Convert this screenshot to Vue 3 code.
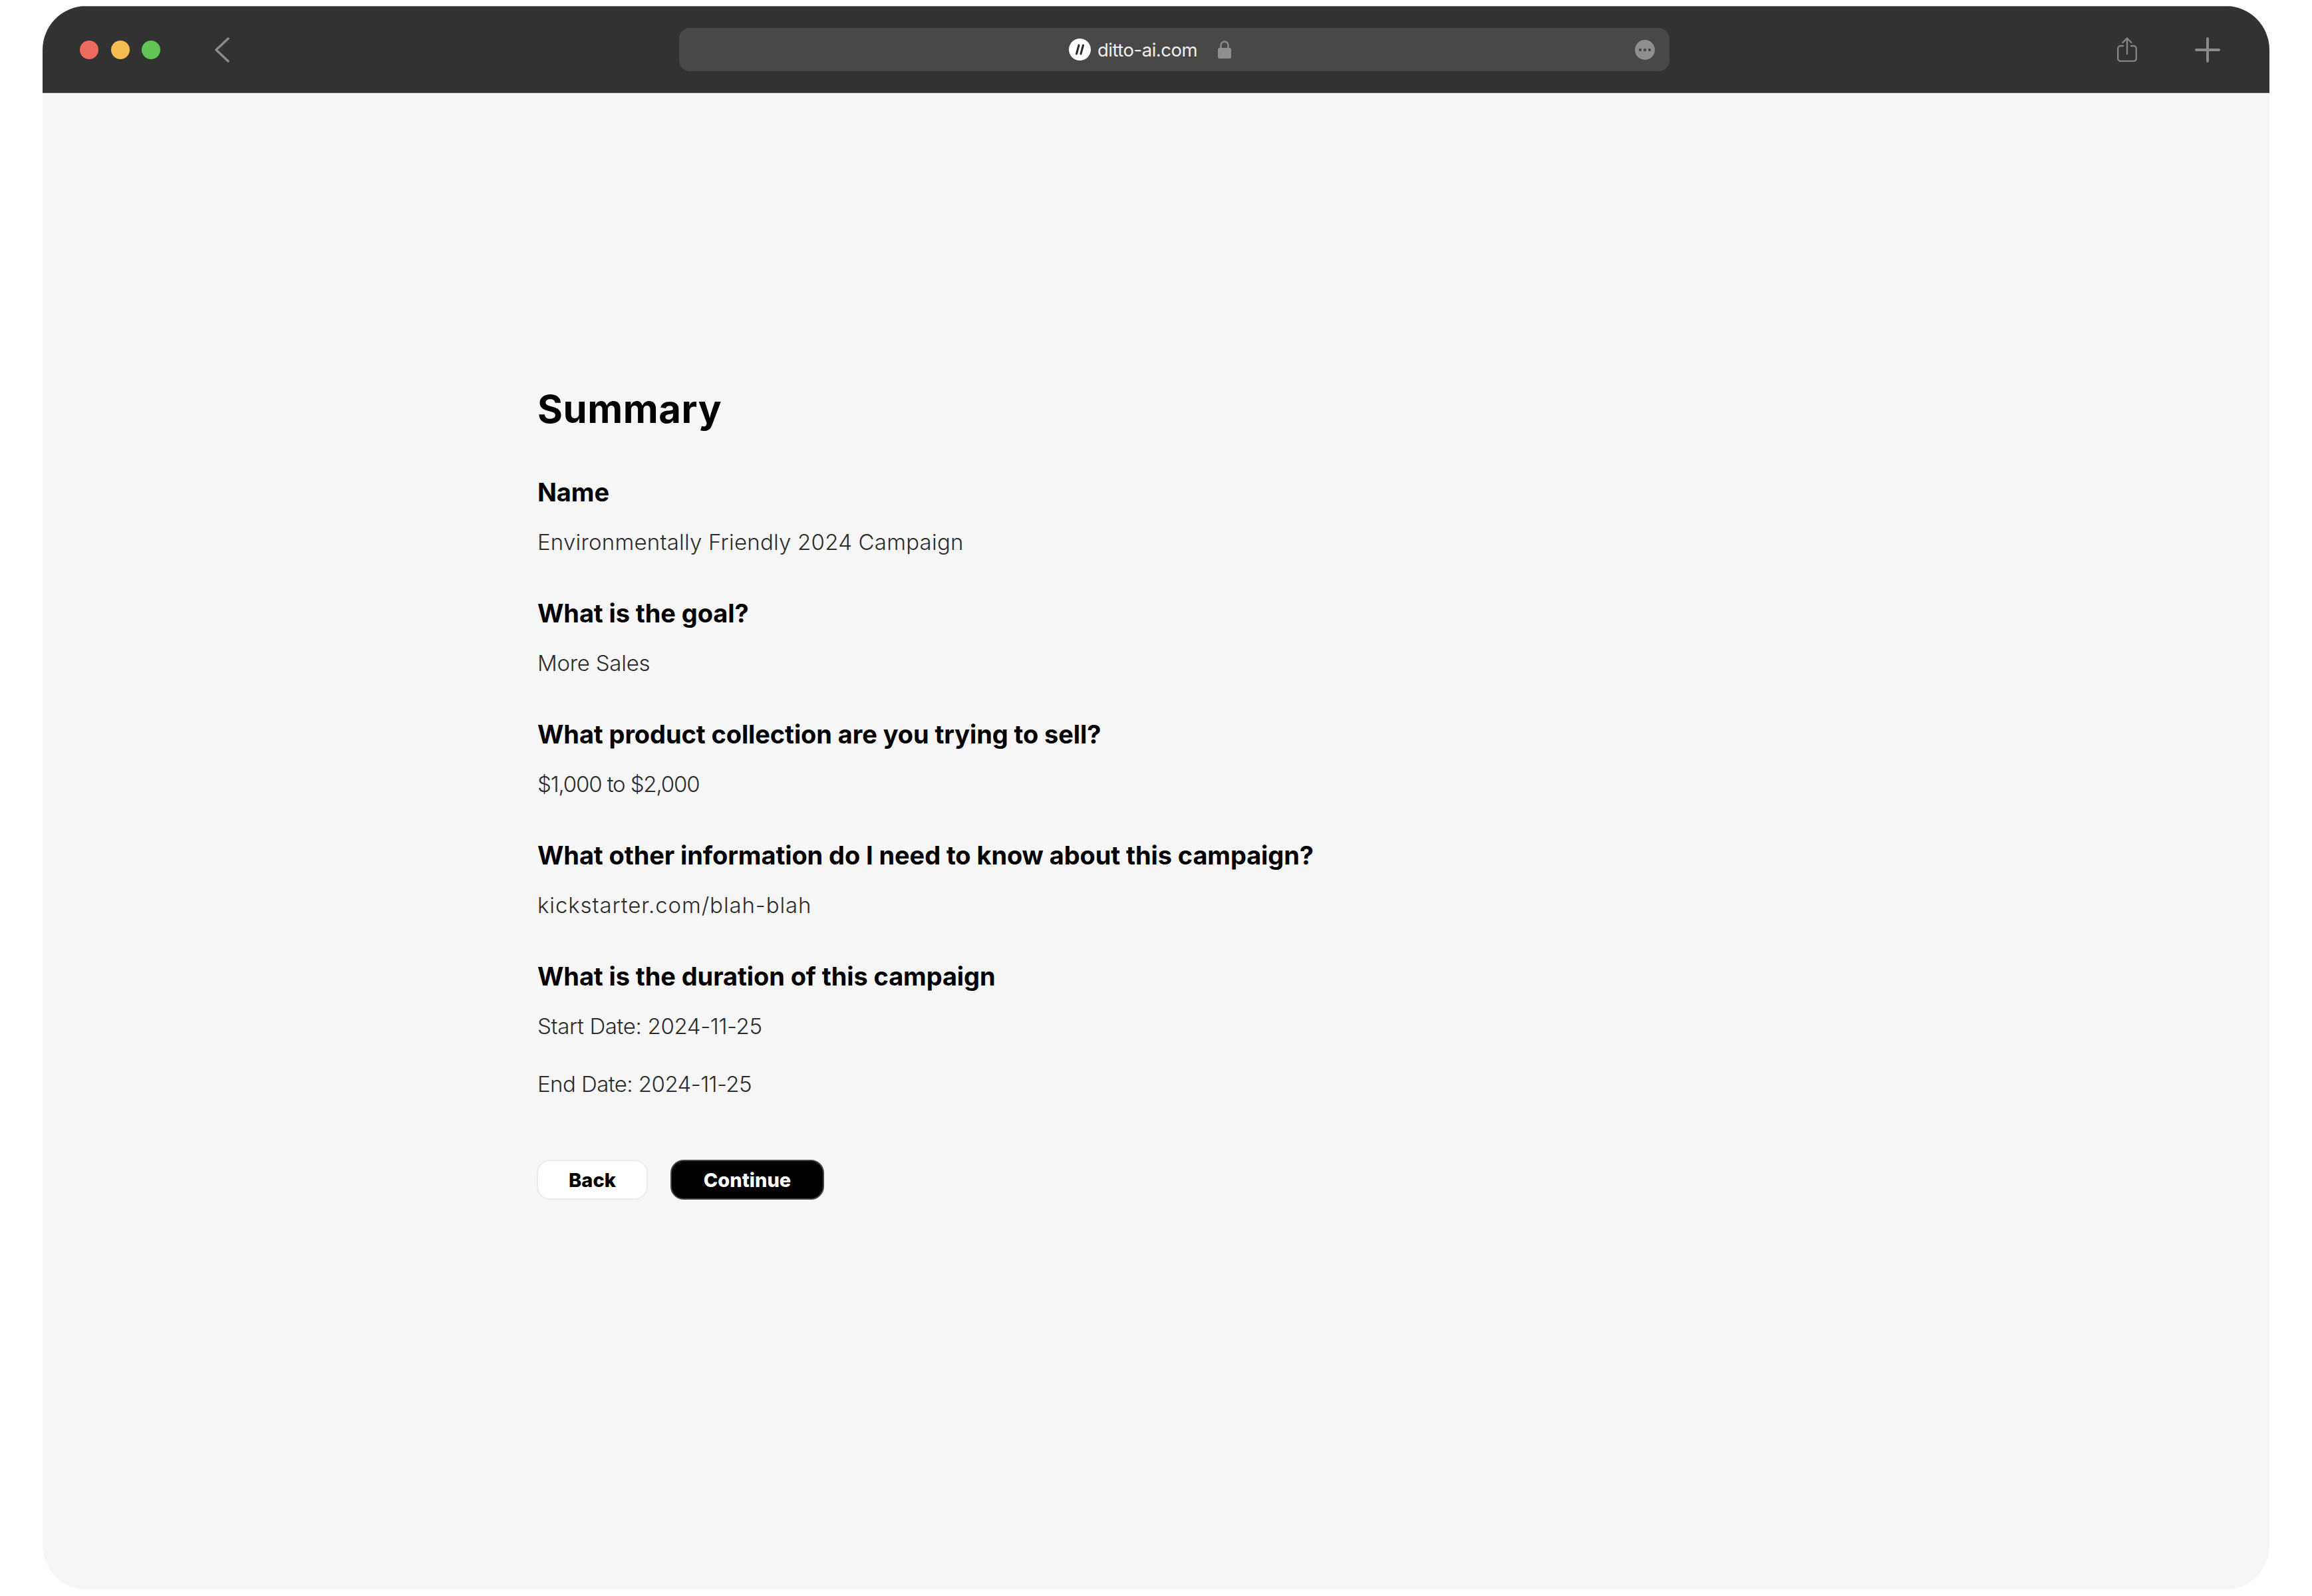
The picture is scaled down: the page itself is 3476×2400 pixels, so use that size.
<script setup>
const sections = [
  { q: 'Name', a: [{ text: 'Environmentally Friendly 2024 Campaign', tracking: 0.22 }] },
  { q: 'What is the goal?', a: [{ text: 'More Sales', tracking: -0.25 }] },
  { q: 'What product collection are you trying to sell?', a: [{ text: '$1,000 to $2,000', tracking: -1.15 }] },
  { q: 'What other information do I need to know about this campaign?', a: [{ text: 'kickstarter.com/blah-blah', tracking: 0.9 }] },
  {
    q: 'What is the duration of this campaign',
    a: [
      { text: 'Start Date: 2024-11-25', tracking: -0.35 },
      { text: 'End Date: 2024-11-25', tracking: -0.55 }
    ]
  }
]
</script>

<template>
  <div class="page">
    <div class="window">
      <header class="bar">
        <div class="lights">
          <span class="light red"></span>
          <span class="light yellow"></span>
          <span class="light green"></span>
        </div>
        <svg class="back" width="24" height="38" viewBox="0 0 24 38" fill="none">
          <path d="M21 2 L3 19 L21 36" stroke="#8a8a8a" stroke-width="3.5" stroke-linecap="round" stroke-linejoin="round" />
        </svg>
        <div class="url">
          <span class="url-center">
            <svg class="logo" width="33" height="33" viewBox="0 0 33 33">
              <circle cx="16.5" cy="16.5" r="16.5" fill="#fff" />
              <path d="M15 10 L11.5 23M21.5 10 L18 23" stroke="#2a2a2a" stroke-width="3" stroke-linecap="round" />
            </svg>
            <span class="domain">ditto-ai.com</span>
            <svg class="lock" width="20" height="27" viewBox="0 0 20 27">
              <path d="M4.5 13V7a5.5 5.5 0 0 1 11 0v6" fill="none" stroke="#8f8f8f" stroke-width="2.4" />
              <rect x="0" y="11" width="20" height="16" rx="2.5" fill="#8f8f8f" />
            </svg>
          </span>
          <svg class="more" width="30" height="30" viewBox="0 0 30 30">
            <circle cx="15" cy="15" r="15" fill="#8f8f8f" />
            <circle cx="8" cy="15" r="2.2" fill="#484848" />
            <circle cx="15" cy="15" r="2.2" fill="#484848" />
            <circle cx="22" cy="15" r="2.2" fill="#484848" />
          </svg>
        </div>
        <svg class="share" width="30" height="37" viewBox="0 0 30 37" fill="none" stroke="#858585" stroke-width="2.4" stroke-linecap="round" stroke-linejoin="round">
          <path d="M9 13H5a4 4 0 0 0-3.8 4v15a4 4 0 0 0 3.8 4h20a4 4 0 0 0 3.8-4V17a4 4 0 0 0-3.8-4h-4" />
          <path d="M15 25V1.5M8.5 8L15 1.5 21.5 8" />
        </svg>
        <svg class="plus" width="38" height="38" viewBox="0 0 38 38" fill="none">
          <path d="M19 2V36M2 19H36" stroke="#8a8a8a" stroke-width="4" stroke-linecap="round" />
        </svg>
      </header>
      <main class="content">
        <h1 class="title">Summary</h1>
        <section v-for="s in sections" :key="s.q" class="section">
          <h2 class="question">{{ s.q }}</h2>
          <p
            v-for="line in s.a"
            :key="line.text"
            class="answer"
            :style="{ letterSpacing: line.tracking + 'px' }"
          >{{ line.text }}</p>
        </section>
        <div class="actions">
          <button class="btn btn-back">Back</button>
          <button class="btn btn-continue">Continue</button>
        </div>
      </main>
    </div>
  </div>
</template>

<style>
html, body { margin: 0; background: #fff; }
</style>

<style scoped>
.page {
  width: 3476px;
  height: 2400px;
  padding: 9px 64px 10px;
  box-sizing: border-box;
  font-family: Inter, "Liberation Sans", sans-serif;
}
.window {
  height: 100%;
  background: #f6f6f6;
  border-radius: 66px;
  overflow: hidden;
  display: flex;
  flex-direction: column;
}
.bar {
  height: 131px;
  flex: none;
  background: #323232;
  box-shadow: inset 0 -1px 0 #5a5a5a, inset 0 1px 0 #777;
  display: flex;
  align-items: center;
  position: relative;
}
.lights { display: flex; gap: 18.5px; margin-left: 56px; }
.light { width: 28px; height: 28px; border-radius: 50%; }
.red { background: #ee6a5f; }
.yellow { background: #f5bd4f; }
.green { background: #61c454; }
.back { margin-left: 81px; }
.url {
  position: absolute;
  left: 957px;
  top: 33px;
  width: 1489px;
  height: 65px;
  background: #484848;
  border-radius: 16px;
}
.url-center {
  position: absolute;
  left: 586px;
  top: 0;
  height: 65px;
  display: flex;
  align-items: center;
}
.domain {
  margin-left: 10px;
  color: #efefef;
  font-size: 27.5px;
  letter-spacing: -0.5px;
}
.lock { margin-left: 31px; }
.more { position: absolute; right: 22px; top: 18px; }
.share { position: absolute; left: 3119px; top: 47px; }
.plus { position: absolute; left: 3236px; top: 47px; }
.content {
  flex: 1;
  padding: 440px 0 0 744px;
}
.title {
  margin: 0 0 65px;
  font-size: 58px;
  line-height: 70px;
  font-weight: 700;
  color: #000;
  letter-spacing: 0.6px;
}
.section { margin-bottom: 57px; }
.question {
  margin: 0 0 25px;
  font-size: 38px;
  line-height: 50px;
  font-weight: 700;
  color: #000;
  letter-spacing: -0.1px;
}
.answer {
  margin: 0 0 37px;
  font-size: 33px;
  line-height: 50px;
  font-weight: 350;
  color: #2b2b2b;
}
.answer:last-child { margin-bottom: 0; }
.actions { display: flex; gap: 34px; margin-top: 89px; margin-left: -1px; }
.btn {
  height: 60px;
  font-family: Inter, "Liberation Sans", sans-serif;
  font-size: 29px;
  font-weight: 800;
  border-radius: 20px;
  box-sizing: border-box;
  padding: 0;
}
.btn-back { width: 167px; background: #fff; color: #000; border: 2px solid #ececec; }
.btn-continue { width: 231px; background: #000; color: #fff; border: 2px solid #444; }
</style>
